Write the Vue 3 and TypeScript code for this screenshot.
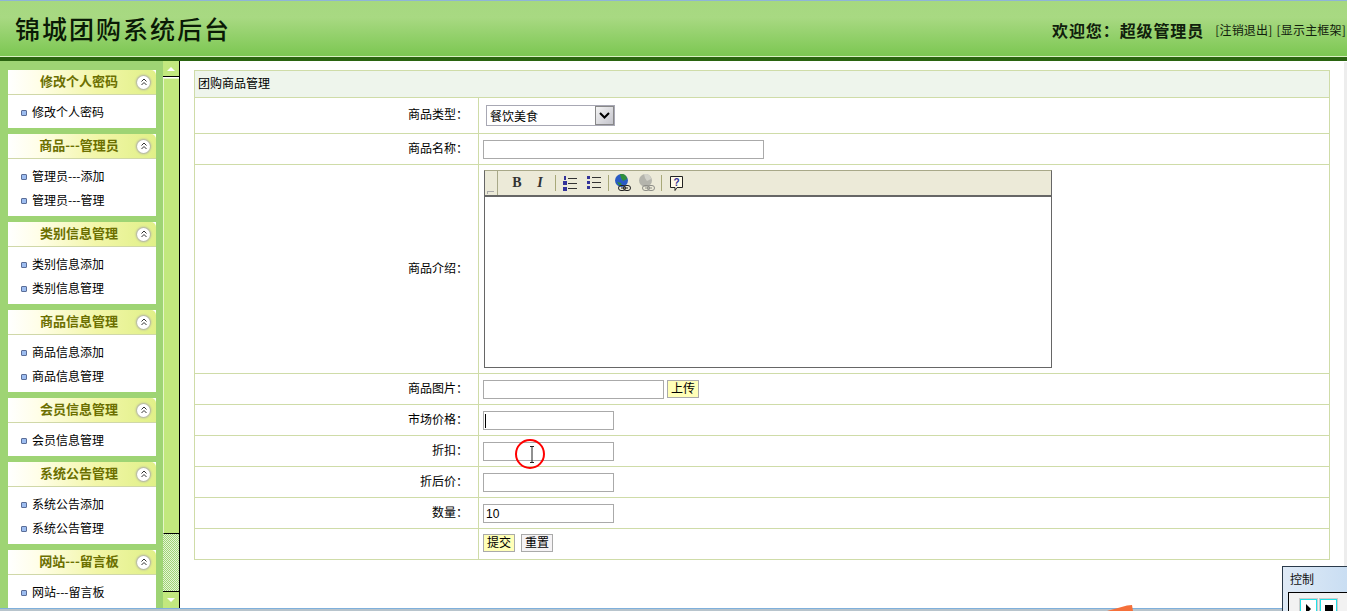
<script setup lang="ts">
interface Group { title: string; items: string[] }
const groups: Group[] = [
  { title: '修改个人密码', items: ['修改个人密码'] },
  { title: '商品---管理员', items: ['管理员---添加', '管理员---管理'] },
  { title: '类别信息管理', items: ['类别信息添加', '类别信息管理'] },
  { title: '商品信息管理', items: ['商品信息添加', '商品信息管理'] },
  { title: '会员信息管理', items: ['会员信息管理'] },
  { title: '系统公告管理', items: ['系统公告添加', '系统公告管理'] },
  { title: '网站---留言板', items: ['网站---留言板'] },
]
</script>

<template>
  <div class="page">
    <header class="top">
      <h1 class="brand">锦城团购系统后台</h1>
      <div class="user">
        <strong class="welcome">欢迎您：超级管理员</strong>
        <a class="toplink">[注销退出]</a>
        <a class="toplink">[显示主框架]</a>
      </div>
    </header>
    <div class="band"></div>

    <div class="body">
      <aside class="side">
        <section v-for="g in groups" :key="g.title" class="group">
          <div class="group-head">
            <span class="group-title">{{ g.title }}</span>
            <span class="collapse">
              <svg width="10" height="10" viewBox="0 0 10 10" fill="none" stroke="#333" stroke-width="1">
                <path d="M2.500 4.500 5 2l2.500 2.500M2.500 8 5 5.500 7.500 8" />
              </svg>
            </span>
          </div>
          <ul class="group-list">
            <li v-for="it in g.items" :key="it" class="group-item"><i class="dot"></i><span class="item-text">{{ it }}</span></li>
          </ul>
        </section>
      </aside>

      <div class="bar">
        <div class="bar-btn"><span class="tri up"></span></div>
        <div class="thumb"></div>
        <div class="track"></div>
        <div class="bar-btn bottom"><span class="tri down"></span></div>
      </div>

      <main class="main">
        <table class="form">
          <colgroup>
            <col class="col-label" />
            <col />
          </colgroup>
          <tbody>
            <tr class="r27"><th colspan="2" class="caption">团购商品管理</th></tr>
            <tr class="r36">
              <td class="label">商品类型：</td>
              <td class="field">
                <span class="select-wrap">
                  <select class="select"><option>餐饮美食</option></select>
                  <span class="select-btn">
                    <svg width="13" height="9" viewBox="0 0 13 9" fill="none" stroke="#000" stroke-width="2"><path d="M2 2l4.500 4.500L11 2" /></svg>
                  </span>
                </span>
              </td>
            </tr>
            <tr class="r31">
              <td class="label">商品名称：</td>
              <td class="field"><input class="inp wide" type="text" /></td>
            </tr>
            <tr class="r209">
              <td class="label">商品介绍：</td>
              <td class="field">
                <div class="editor">
                  <div class="toolbar">
                    <span class="grip"><i></i></span>
                    <span class="tb b">B</span>
                    <span class="tb i">I</span>
                    <span class="sep s1"></span>
                    <svg class="ico ol" width="14" height="15" viewBox="0 0 14 15">
                      <g fill="#33339a"><rect x="1" y="0" width="2" height="4" /><rect x="0" y="5" width="4" height="4" /><rect x="0" y="11" width="4" height="4" /></g>
                      <g stroke="#333"><path d="M5 2.500h9M5 7.500h9M5 12.500h9" /></g>
                    </svg>
                    <svg class="ico ul" width="14" height="14" viewBox="0 0 14 14">
                      <g fill="#33339a"><rect x="0" y="0" width="3" height="3" /><rect x="0" y="5" width="3" height="3" /><rect x="0" y="10" width="3" height="3" /></g>
                      <g stroke="#333"><path d="M5 1.500h9M5 6.500h9M5 11.500h9" /></g>
                    </svg>
                    <span class="sep s2"></span>
                    <svg class="ico globe" width="16" height="18" viewBox="0 0 16 18">
                      <circle cx="6.500" cy="6.500" r="6.500" fill="#2a5bc4" />
                      <path d="M5 0c4-1 7 2 7 5L8 7 6 4zM2 8l4 1 1 3-3-1z" fill="#2f8f3a" />
                      <g fill="none" stroke="#222"><rect x="3.500" y="11.500" width="7" height="5" rx="2.500" /><rect x="8.500" y="11.500" width="7" height="5" rx="2.500" /><path d="M6 14h7" /></g>
                    </svg>
                    <svg class="ico grey" width="16" height="18" viewBox="0 0 16 18">
                      <circle cx="6.500" cy="6.500" r="6.500" fill="#b4b4ac" />
                      <path d="M5 0c4-1 7 2 7 5L8 7 6 4z" fill="#d2d2ca" />
                      <g fill="none" stroke="#8e8e88"><rect x="3.500" y="11.500" width="7" height="5" rx="2.500" /><rect x="8.500" y="11.500" width="7" height="5" rx="2.500" /><path d="M6 14h7" /></g>
                    </svg>
                    <span class="sep s3"></span>
                    <svg class="ico" width="15" height="17" viewBox="0 0 15 17">
                      <path d="M1.500 1.500h12v11H8l-2 3v-3H1.500z" fill="#fffbe8" stroke="#222" />
                      <text x="7.500" y="10.500" font-size="10" font-weight="700" font-family="Liberation Sans" text-anchor="middle" fill="#33339a">?</text>
                    </svg>
                  </div>
                  <div class="editor-area"></div>
                </div>
              </td>
            </tr>
            <tr class="r31">
              <td class="label">商品图片：</td>
              <td class="field upload">
                <input class="inp img" type="text" />
                <button class="btn yellow" type="button">上传</button>
              </td>
            </tr>
            <tr class="r31">
              <td class="label">市场价格：</td>
              <td class="field"><input class="inp short caret" type="text" /></td>
            </tr>
            <tr class="r31">
              <td class="label">折扣：</td>
              <td class="field"><input class="inp short" type="text" /></td>
            </tr>
            <tr class="r31">
              <td class="label">折后价：</td>
              <td class="field"><input class="inp short" type="text" /></td>
            </tr>
            <tr class="r31">
              <td class="label">数量：</td>
              <td class="field"><input class="inp short" type="text" value="10" /></td>
            </tr>
            <tr class="r31">
              <td class="label"></td>
              <td class="field actions">
                <button class="btn yellow" type="button">提交</button>
                <button class="btn plain" type="button">重置</button>
              </td>
            </tr>
          </tbody>
        </table>
      </main>
      <div class="page-scroll"></div>
    </div>
    <div class="task"></div>

    <svg class="highlight" width="32" height="32" viewBox="0 0 32 32" fill="none">
      <circle cx="16" cy="16" r="14" stroke="#f00" stroke-width="2" />
      <path d="M16 8.500h4M16 24.500h4M18 8v17" stroke="#222" stroke-width="1" />
    </svg>
    <svg class="arrow" width="26" height="6" viewBox="0 0 26 6"><path d="M0 6 20 .500l5-.500 1 6z" fill="#f5703a" /></svg>
    <div class="control">
      <div class="control-title">控制</div>
      <div class="control-box">
        <span class="cbtn"><i class="play"></i></span>
        <span class="cbtn"><i class="stop"></i></span>
      </div>
    </div>
  </div>
</template>

<style>
html, body { margin: 0; background: #fff; overflow: hidden; }
</style>

<style scoped>
.page {
  position: relative;
  width: 1347px;
  height: 611px;
  overflow: hidden;
  display: flex;
  flex-direction: column;
  background: #fff;
  color: #000;
  font-family: "Noto Sans CJK SC", "Liberation Sans", sans-serif;
  font-size: 12px;
}
.top {
  height: 57px;
  flex: none;
  box-sizing: border-box;
  border-top: 1px solid #8fb4d8;
  border-bottom: 1px solid #d8f0c0;
  background: linear-gradient(#a6d880 0, #a8d982 30%, #7cc752 100%);
  display: flex;
  align-items: center;
  justify-content: space-between;
  padding: 0 1px 0 15px;
}
.brand { margin: 0; font-size: 25px; font-weight: 500; letter-spacing: 2px; line-height: 1; color: #0a1a06; }
.user { display: flex; align-items: center; padding-top: 2px; }
.welcome { font-size: 16px; font-weight: 700; letter-spacing: .900px; margin-right: 7px; color: #10200c; }
.toplink { margin-left: 4px; font-size: 12px; letter-spacing: .200px; color: #10200c; }
.band { height: 4px; flex: none; background: #2a6410; }
.body { flex: 1; min-height: 0; display: flex; }
.side {
  width: 163px;
  flex: none;
  box-sizing: border-box;
  background: #9ed474;
  padding: 9px 7px 0 8px;
  overflow: hidden;
}
.group { background: #fff; margin-bottom: 6px; }
.group-head {
  height: 25px;
  box-sizing: border-box;
  border-bottom: 1px solid #d0d8a8;
  border-radius: 5px 5px 0 0;
  background: linear-gradient(90deg, #fff 0, #fffee8 20%, #f2f6a8 60%, #e0f088 100%);
  display: flex;
  align-items: center;
  padding-right: 6px;
}
.group-title { flex: 1; text-align: center; font-size: 13px; font-weight: 700; color: #6b6f00; padding: 0 0 3px 13px; }
.collapse {
  width: 13px;
  height: 13px;
  border-radius: 50%;
  background: #fff;
  box-shadow: 0 0 2px 1px #aaa;
  display: flex;
  align-items: center;
  justify-content: center;
}
.group-list { list-style: none; margin: 0; padding: 6px 0 3px 13px; }
.group-item { height: 24px; display: flex; align-items: center; font-size: 12px; color: #000; }
.item-text { margin-top: -4px; margin-left: -2px; }
.dot {
  width: 4px;
  height: 4px;
  margin-right: 7px;
  border: 1px solid #5b6e98;
  border-radius: 1px;
  background: #9dbdf0;
}
.bar {
  width: 16px;
  flex: none;
  border-right: 1px solid #000;
  display: flex;
  flex-direction: column;
}
.bar-btn {
  height: 15px;
  flex: none;
  background: #c2e87e;
  border-bottom: 1px solid #000;
  display: flex;
  align-items: center;
  justify-content: center;
}
.bar-btn.bottom { border-bottom: 0; border-top: 1px solid #000; height: 16px; }
.tri { width: 0; height: 0; border-left: 4px solid transparent; border-right: 4px solid transparent; }
.tri.up { border-bottom: 4px solid #fff; }
.tri.down { border-top: 4px solid #fff; }
.thumb {
  height: 456px;
  flex: none;
  margin-top: 1px;
  box-sizing: border-box;
  background: #c2e87e;
  border-top: 1px solid #e6f6c8;
  border-left: 1px solid #e6f6c8;
  border-bottom: 1px solid #000;
}
.track {
  flex: 1;
  background-color: #e6f4d6;
  background-image: conic-gradient(#9ed474 25%, transparent 0 50%, #9ed474 0 75%, transparent 0);
  background-size: 2px 2px;
}
.main { flex: 1; min-width: 0; padding: 9px 0 0 14px; }
.form {
  width: 1136px;
  table-layout: fixed;
  border-collapse: collapse;
}
.col-label { width: 284px; }
.form td, .form th { border: 1px solid #cfdca8; padding: 0; }
.r27 { height: 27px; }
.r36 { height: 36px; }
.r31 { height: 31px; }
.r209 { height: 209px; }
.caption {
  background: #eef5ec;
  font-size: 12px;
  font-weight: 400;
  text-align: left;
  padding: 0 0 4px 3px !important;
}
.label { text-align: right; padding-right: 10px !important; padding-bottom: 4px !important; }
.field { padding: 0 0 0 4px !important; vertical-align: middle; }
.select-wrap { position: relative; display: inline-block; margin: 0 0 0 3px; vertical-align: middle; }
.select {
  appearance: none;
  width: 129px;
  height: 21px;
  box-sizing: border-box;
  display: block;
  border: 1px solid #a8a8b4;
  border-radius: 0;
  background: #fff;
  padding: 0 0 0 3px;
  font: 12px "Noto Sans CJK SC", sans-serif;
  color: #000;
}
.select-btn {
  position: absolute;
  right: 1px;
  top: 1px;
  width: 19px;
  height: 19px;
  box-sizing: border-box;
  background: linear-gradient(135deg, #f4f4f4, #c4c4cc);
  border: 1px solid #888;
  display: flex;
  align-items: center;
  justify-content: center;
}
.inp {
  height: 19px;
  box-sizing: border-box;
  border: 1px solid #aaa;
  border-radius: 0;
  padding: 0 2px;
  outline: 0;
  background: #fff;
  font: 12px "Liberation Sans", sans-serif;
  color: #000;
  vertical-align: middle;
  display: inline-block;
}
.wide { width: 281px; }
.img { width: 181px; }
.short { width: 131px; }
.caret { background: linear-gradient(#000, #000) no-repeat 1px 2px / 1px 14px, #fff; }
.upload { font-size: 0; }
.btn {
  width: 32px;
  height: 18px;
  box-sizing: border-box;
  border: 1px solid #aaa;
  border-radius: 0;
  padding: 0 0 3px;
  font: 12px/13px "Noto Sans CJK SC", sans-serif;
  color: #000;
  vertical-align: middle;
}
.yellow { background: #ffffb8; }
.plain { background: #f5f3f5; margin-left: 6px; }
.upload .btn { margin-left: 3px; }
.actions .btn { position: relative; top: -1px; }
.editor { margin: 0 0 0 1px; width: 568px; height: 198px; box-sizing: border-box; border: 1px solid #666; border-top: 1px solid #a8a888; display: flex; flex-direction: column; }
.toolbar {
  height: 26px;
  flex: none;
  box-sizing: border-box;
  background: #ecead8;
  border-bottom: 2px solid #666;
  display: flex;
  align-items: center;
}
.grip { width: 13px; height: 24px; box-sizing: border-box; border-right: 1px solid #a8a888; position: relative; margin-right: 14px; }
.grip i { position: absolute; left: 2px; bottom: 1px; width: 6px; height: 2px; border: 1px solid #aaa; border-width: 1px 0 0 1px; }
.tb { width: 10px; margin-right: 13px; text-align: center; font: 700 14px "Liberation Serif", serif; color: #333; }
.tb.i { font-style: italic; margin-right: 10px; }
.sep { width: 1px; height: 16px; background: #a8a878; flex: none; }
.s1 { margin-right: 7px; }
.s2 { margin: 0 6px 0 7px; }
.s3 { margin: 0 7px 0 6px; }
.ul { margin-left: 10px; }
.grey { margin-left: 8px; }
.ico { flex: none; }
.editor-area { flex: 1; background: #fff; }
.actions { font-size: 0; }
.page-scroll { position: absolute; right: 0; top: 62px; bottom: 3px; width: 3px; background: #ededed; }
.task { height: 3px; flex: none; border-top: 1px solid #7fb0dc; background: #b8c4cc; box-sizing: border-box; }
.highlight { position: absolute; left: 514px; top: 438px; }
.arrow { position: absolute; left: 1107px; top: 605px; }
.control {
  position: absolute;
  left: 1282px;
  top: 566px;
  width: 70px;
  height: 50px;
  box-sizing: border-box;
  border: 1px solid #2a3a4a;
  background: linear-gradient(90deg, #dfeaf6, #c8ddf2);
  padding: 5px 0 0 5px;
}
.control-title { height: 20px; line-height: 14px; font-size: 12px; color: #111; padding-left: 2px; }
.control-box { border: 1px solid #000; background: #f2f2f2; height: 30px; padding: 6px 0 0 11px; display: flex; gap: 3px; }
.cbtn { width: 17px; height: 20px; box-sizing: border-box; border: 1px solid #20e0e8; background: #fff; outline: 1px solid #ccc; display: flex; align-items: center; justify-content: center; }
.play { width: 0; height: 0; border-left: 5px solid #000; border-top: 5px solid transparent; border-bottom: 5px solid transparent; }
.stop { width: 8px; height: 8px; background: #000; }
</style>
